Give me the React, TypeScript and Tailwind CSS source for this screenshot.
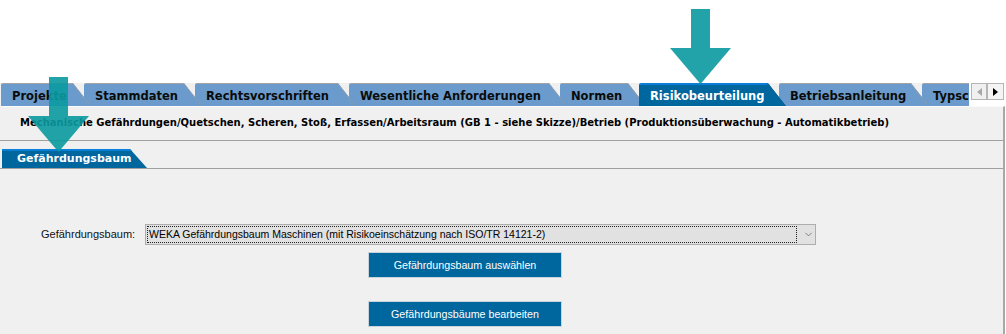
import { ChevronDown } from 'lucide-react';

type Tab = { label: string; width: string; z: string; active?: boolean };

const tabs: Tab[] = [
  { label: 'Projekte', width: 'w-[90px]', z: 'z-[8]' },
  { label: 'Stammdaten', width: 'w-[118px]', z: 'z-[7]' },
  { label: 'Rechtsvorschriften', width: 'w-[161px]', z: 'z-[6]' },
  { label: 'Wesentliche Anforderungen', width: 'w-[218px]', z: 'z-[5]' },
  { label: 'Normen', width: 'w-[86px]', z: 'z-[4]' },
  { label: 'Risikobeurteilung', width: 'w-[147px]', z: 'z-[9]', active: true },
  { label: 'Betriebsanleitung', width: 'w-[150px]', z: 'z-[2]' },
  { label: 'Typschild', width: 'w-[120px]', z: 'z-[1]' },
];

const tabFont = { fontFamily: '"DejaVu Sans", Verdana, sans-serif' };
const uiFont = { fontFamily: '"Liberation Sans", Arial, sans-serif' };

function TabItem({ tab, first }: { tab: Tab; first: boolean }) {
  return (
    <div className={`relative h-[23px] shrink-0 ${tab.width} ${tab.z} ${first ? '' : '-ml-[7px]'}`}>
      <div
        className={`absolute inset-0 rounded-tl-[2px] [clip-path:polygon(0_0,calc(100%-18px)_0,100%_100%,0_100%)] ${
          tab.active ? 'bg-[#00669e] border-t-2 border-[#0a7fd8]' : 'bg-[#6a9bcc] border-t border-[#a3a3a3]'
        }`}
      />
      <svg className="absolute right-0 top-0" width="19" height="23" viewBox="0 0 19 23">
        <line x1="0.5" y1="0.5" x2="18.5" y2="23" stroke={tab.active ? '#0a5f8e' : '#8a9aaa'} strokeWidth="1" />
      </svg>
      <span
        className={`relative block pl-[11px] pt-[5px] text-[11.5px] font-bold leading-[16px] whitespace-nowrap ${
          tab.active ? 'text-white' : 'text-[#0b0b0b]'
        }`}
      >
        {tab.label}
      </span>
    </div>
  );
}

function Arrow({ className }: { className: string }) {
  return (
    <svg className={`absolute pointer-events-none ${className}`} width="62" height="76" viewBox="0 0 62 76">
      <g fill="#0b9aa0" opacity="0.9">
        <polygon points="21,0 40,0 40,51 30.5,63 21,51" />
        <polygon points="0,39 61,39 30.5,75" />
      </g>
    </svg>
  );
}

export default function App() {
  return (
    <div className="relative w-[1006px] h-[334px] bg-white overflow-hidden" style={uiFont}>
      <div className="h-[83px]" />

      {/* main tab strip */}
      <div className="flex h-[23px]" style={tabFont}>
        <div className="flex w-[969px] overflow-hidden bg-[#f0f0f0] pl-[1px]">
          {tabs.map((t, i) => (
            <TabItem key={t.label} tab={t} first={i === 0} />
          ))}
        </div>
        <div className="flex h-[17px] ml-[2px]">
          <div className="w-[16px] h-[17px] border border-[#b5b5b5] bg-[#f0f0f0] flex items-center justify-center">
            <div className="w-0 h-0 border-y-[4px] border-y-transparent border-r-[5px] border-r-[#a8a8a8]" />
          </div>
          <div className="w-[17px] h-[17px] border border-[#b5b5b5] bg-[#f4f4f4] flex items-center justify-center">
            <div className="w-0 h-0 border-y-[4px] border-y-transparent border-l-[5px] border-l-black" />
          </div>
        </div>
      </div>

      {/* panel */}
      <div className="w-[1005px] h-[228px] bg-[#f0f0f0] border-r-2 border-[#a8a8a8] border-t border-t-[#fafafa]">
        <div className="h-[34px] flex items-center pl-[20px] pb-[2px] border-b border-[#a0a0a0]" style={tabFont}>
          <span className="text-[10px] font-bold text-black whitespace-nowrap">
            Mechanische Gefährdungen/Quetschen, Scheren, Stoß, Erfassen/Arbeitsraum (GB 1 - siehe Skizze)/Betrieb (Produktionsüberwachung - Automatikbetrieb)
          </span>
        </div>

        {/* sub tab strip */}
        <div className="h-[28px] flex items-end pl-[2px] border-b border-[#a0a0a0]" style={tabFont}>
          <div className="relative h-[19px] w-[145px]">
            <div className="absolute inset-0 bg-[#00669e] border-t-2 border-[#0a7fd8] [clip-path:polygon(0_0,calc(100%-17px)_0,100%_100%,0_100%)]" />
            <span className="relative block pl-[15px] pt-[2px] text-[11px] font-bold leading-[15px] text-white whitespace-nowrap">
              Gefährdungsbaum
            </span>
          </div>
        </div>

        {/* content */}
        <div className="pt-[55px]">
          <div className="flex items-center h-[21px]">
            <span className="w-[145px] pl-[41px] text-[11px] text-[#111] whitespace-nowrap">Gefährdungsbaum:</span>
            <div className="relative w-[671px] h-[21px] bg-[#e1e1e1] border border-[#adadad] flex items-center">
              <div className="ml-[1px] w-[650px] h-[17px] border border-dotted border-[#222] flex items-center">
                <span className="text-[10.5px] text-black whitespace-nowrap pl-[1px] leading-[15px]">
                  WEKA Gefährdungsbaum Maschinen (mit Risikoeinschätzung nach ISO/TR 14121-2)
                </span>
              </div>
              <ChevronDown className="ml-[6px] text-[#555]" size={11} strokeWidth={1.5} />
            </div>
          </div>

          <div className="ml-[368px] mt-[7px] flex flex-col gap-[23px]">
            <button className="w-[194px] h-[26px] bg-[#00669e] border border-[#c8d3dc] text-white text-[10.7px]">
              Gefährdungsbaum auswählen
            </button>
            <button className="w-[194px] h-[26px] bg-[#00669e] border border-[#c8d3dc] text-white text-[10.7px]">
              Gefährdungsbäume bearbeiten
            </button>
          </div>
        </div>
      </div>

      <Arrow className="left-[28px] top-[77px] z-20" />
      <Arrow className="left-[670px] top-[9px] z-20" />
    </div>
  );
}
